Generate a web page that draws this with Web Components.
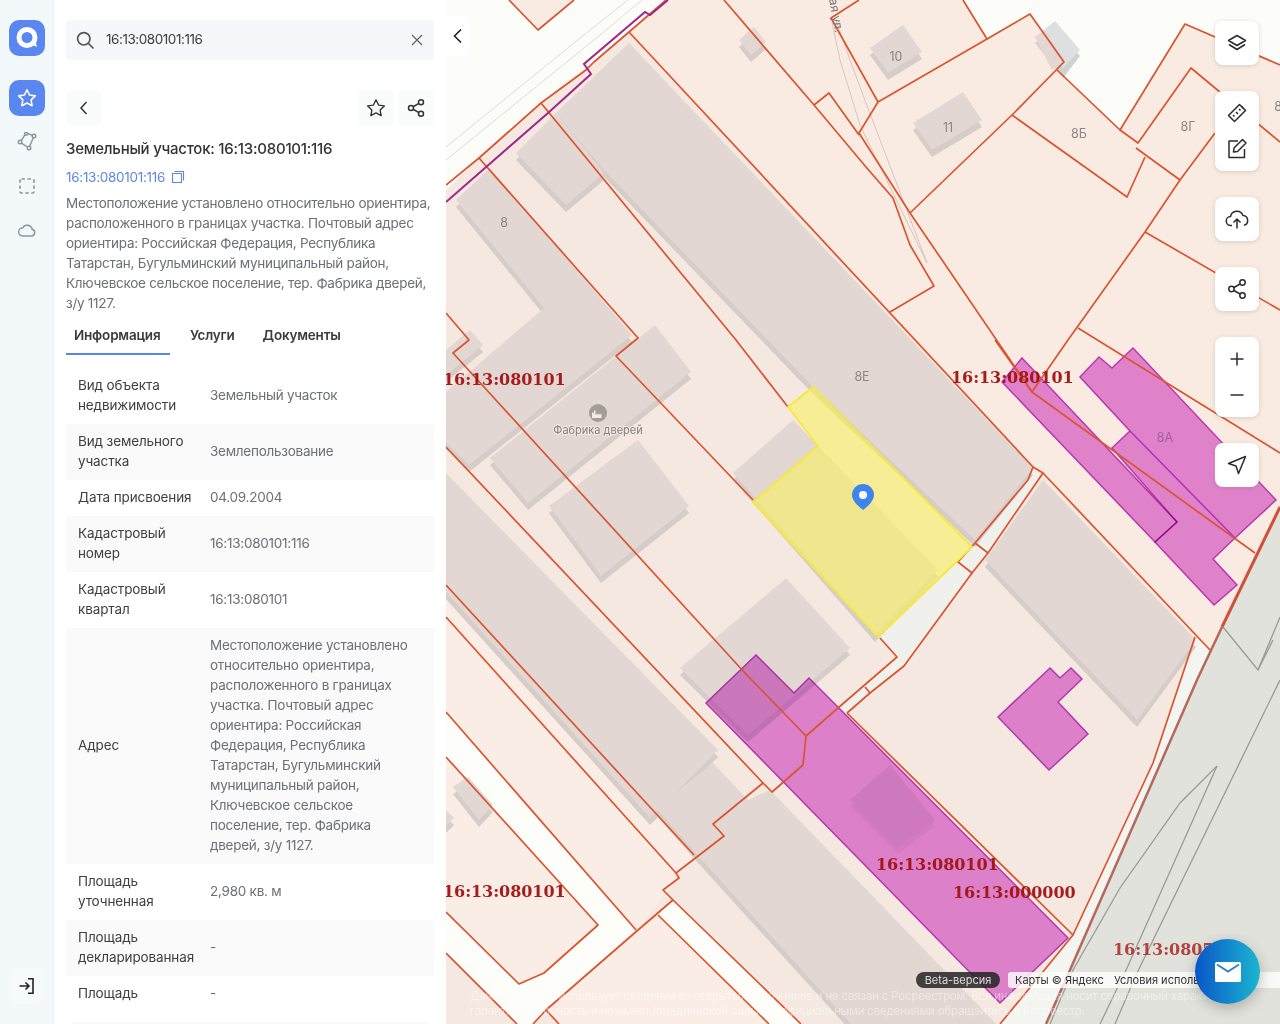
<!DOCTYPE html>
<html lang="ru">
<head>
<meta charset="utf-8">
<title>Земельный участок</title>
<style>
  html, body { margin: 0; height: 100%; overflow: hidden; }
  body { font-family: "Inter", "Noto Sans", sans-serif; font-size: 14px; color: #333; }
</style>
</head>
<body>
<app-shell>
  <rail-bar slot="rail">
    <rail-button kind="logo"><svg viewBox="0 0 36 36" width="36" height="36"><circle cx="18" cy="17.500" r="8" fill="none" stroke="#fff" stroke-width="5"/><path d="M22 24l6 3-2-8z" fill="#fff"/></svg></rail-button>
    <rail-button kind="active"><svg viewBox="0 0 24 24" width="22" height="22" fill="none" stroke="#fff" stroke-width="1.700" stroke-linejoin="round"><path d="M12 3l2.800 5.800 6.300.9-4.600 4.400 1.100 6.300L12 17.400l-5.600 3 1.100-6.300L2.900 9.700l6.300-.9z"/></svg></rail-button>
    <rail-button><svg viewBox="0 0 20 20" width="20" height="20" fill="none" stroke="#8a949c" stroke-width="1.400"><path d="M4.300 8.700L7.800 2.800M10.800 1.500l4.500 1.800M16.300 5.800L12.700 14.200M10.400 15L4.400 11.200"/><circle cx="3" cy="10" r="1.800"/><circle cx="9" cy="1.800" r="1.500"/><circle cx="17" cy="4" r="1.800"/><circle cx="12" cy="16" r="1.800"/></svg></rail-button>
    <rail-button><svg viewBox="0 0 20 20" width="20" height="20" fill="none" stroke="#8a949c" stroke-width="1.600"><rect x="3" y="3" width="14" height="14" rx="1.500" stroke-dasharray="3.400 2.600"/></svg></rail-button>
    <rail-button><svg viewBox="0 0 20 20" width="20" height="20" fill="none" stroke="#8a949c" stroke-width="1.400" stroke-linejoin="round"><path d="M5.500 16h9a3.400 3.400 0 0 0 .6-6.700A5 5 0 0 0 5.700 8 4 4 0 0 0 5.500 16z"/></svg></rail-button>
    <rail-button kind="exit" slot="bottom"><svg viewBox="0 0 20 20" width="20" height="20" fill="none" stroke="#222" stroke-width="1.600"><path d="M11 2.800h5v14.400h-5M2.500 10h9.500M8.500 6.500L12 10l-3.500 3.500"/></svg></rail-button>
  </rail-bar>

  <object-panel slot="panel">
    <search-box value="16:13:080101:116"></search-box>
    <panel-actions></panel-actions>
    <object-head name="Земельный участок: 16:13:080101:116" number="16:13:080101:116">Местоположение установлено относительно ориентира, расположенного в границах участка. Почтовый адрес ориентира: Российская Федерация, Республика Татарстан, Бугульминский муниципальный район, Ключевское сельское поселение, тер. Фабрика дверей, з/у 1127.</object-head>
    <info-tabs></info-tabs>
    <info-table>
      <info-row label="Вид объекта недвижимости">Земельный участок</info-row>
      <info-row label="Вид земельного участка">Землепользование</info-row>
      <info-row label="Дата присвоения">04.09.2004</info-row>
      <info-row label="Кадастровый номер">16:13:080101:116</info-row>
      <info-row label="Кадастровый квартал">16:13:080101</info-row>
      <info-row label="Адрес">Местоположение установлено относительно ориентира, расположенного в границах участка. Почтовый адрес ориентира: Российская Федерация, Республика Татарстан, Бугульминский муниципальный район, Ключевское сельское поселение, тер. Фабрика дверей, з/у 1127.</info-row>
      <info-row label="Площадь уточненная">2,980 кв. м</info-row>
      <info-row label="Площадь декларированная">-</info-row>
      <info-row label="Площадь" tall>-</info-row>
      <info-row label=" " stub> </info-row>
    </info-table>
  </object-panel>

  <map-view slot="map">
    <map-tools></map-tools>
    <map-footer></map-footer>
  </map-view>
</app-shell>

<script>
class AppShell extends HTMLElement {
  constructor() {
    super();
    this.attachShadow({ mode: 'open' });
    this.shadowRoot.innerHTML = `
      <style>
        :host { display: flex; width: 1280px; height: 1024px; overflow: hidden; }
        ::slotted([slot=rail]) { flex: 0 0 54px; }
        ::slotted([slot=panel]) { flex: 0 0 392px; }
        ::slotted([slot=map]) { flex: 1 1 auto; }
      </style>
      <slot name="rail"></slot><slot name="panel"></slot><slot name="map"></slot>`;
  }
}

class RailBar extends HTMLElement {
  constructor() {
    super();
    this.attachShadow({ mode: 'open' });
    this.shadowRoot.innerHTML = `
      <style>
        :host { display: flex; flex-direction: column; align-items: center; box-sizing: border-box;
          height: 1024px; padding: 20px 0 20px; background: #f3f8fb; box-shadow: inset -3px 0 3px -2px #e8eef2; }
        .top { display: flex; flex-direction: column; gap: 8px; flex: 1; }
      </style>
      <div class="top"><slot></slot></div>
      <slot name="bottom"></slot>`;
  }
}

class RailButton extends HTMLElement {
  constructor() {
    super();
    this.attachShadow({ mode: 'open' });
    this.shadowRoot.innerHTML = `
      <style>
        :host { display: flex; width: 36px; height: 36px; align-items: center; justify-content: center; border-radius: 10px; }
        :host([kind=logo]) { background: #5a86f0; margin-bottom: 16px; }
        :host([kind=active]) { background: #5a86f0; }
        :host([kind=exit]) { background: #f7fafc; }
        ::slotted(svg) { display: block; }
      </style>
      <slot></slot>`;
  }
}

class SearchBox extends HTMLElement {
  constructor() {
    super();
    this.attachShadow({ mode: 'open' });
    this.shadowRoot.innerHTML = `
      <style>
        :host { display: flex; align-items: center; height: 40px; background: #f5f7fa; border-radius: 4px;
          padding: 0 10px 0 9px; color: #3d3d3d; font-size: 13.500px; letter-spacing: -.45px; }
        span { flex: 1; margin-left: 11px; position: relative; top: -1px; }
        svg { display: block; }
      </style>
      <svg viewBox="0 0 20 20" width="20" height="20" fill="none" stroke="#555" stroke-width="1.700"><circle cx="8.800" cy="8.800" r="6.200"/><path d="M13.500 13.500L18.500 18.500"/></svg>
      <span></span>
      <svg viewBox="0 0 14 14" width="14" height="14" fill="none" stroke="#666" stroke-width="1.300"><path d="M2 2l10 10M12 2L2 12"/></svg>`;
    this.shadowRoot.querySelector('span').textContent = this.getAttribute('value');
  }
}

class SquareButton extends HTMLElement {
  constructor() {
    super();
    this.attachShadow({ mode: 'open' });
    this.shadowRoot.innerHTML = `
      <style>
        :host { display: flex; width: 36px; height: 36px; align-items: center; justify-content: center;
          background: #fafbfb; border-radius: 6px; }
        ::slotted(svg) { display: block; }
      </style>
      <slot></slot>`;
  }
}

class PanelActions extends HTMLElement {
  constructor() {
    super();
    this.attachShadow({ mode: 'open' });
    this.shadowRoot.innerHTML = `
      <style>
        :host { display: flex; gap: 4px; margin-top: 30px; }
        .sp { flex: 1; }
      </style>
      <square-button><svg viewBox="0 0 20 20" width="20" height="20" fill="none" stroke="#333" stroke-width="1.500"><path d="M12.500 4L7 10l5.500 6"/></svg></square-button>
      <div class="sp"></div>
      <square-button><svg viewBox="0 0 24 24" width="22" height="22" fill="none" stroke="#333" stroke-width="1.500" stroke-linejoin="round"><path d="M12 3l2.800 5.800 6.300.9-4.600 4.400 1.100 6.300L12 17.400l-5.600 3 1.100-6.300L2.900 9.700l6.300-.9z"/></svg></square-button>
      <square-button><svg viewBox="0 0 24 24" width="20" height="20" fill="none" stroke="#333" stroke-width="1.800"><circle cx="18" cy="5" r="3"/><circle cx="6" cy="12" r="3"/><circle cx="18" cy="19" r="3"/><path d="M8.600 10.500l6.800-4M8.600 13.500l6.800 4"/></svg></square-button>`;
  }
}

class ObjectHead extends HTMLElement {
  constructor() {
    super();
    this.attachShadow({ mode: 'open' });
    this.shadowRoot.innerHTML = `
      <style>
        :host { display: block; margin-top: 13px; }
        h1 { margin: 0; font-size: 15px; line-height: 20px; font-weight: 500; color: #333; letter-spacing: -.24px; }
        .num { display: flex; align-items: center; gap: 6px; margin-top: 8px; height: 20px; color: #5f89e0; font-size: 13.500px; letter-spacing: -.28px; }
        p { margin: 6px 0 0; font-size: 13.500px; line-height: 20px; color: #6d7074; letter-spacing: -.27px; }
      </style>
      <h1></h1>
      <div class="num"><span></span><svg viewBox="0 0 14 14" width="14" height="14" fill="none" stroke="#5f89e0" stroke-width="1.100"><rect x="1.500" y="3.500" width="9" height="9"/><path d="M3.500 1.500h9v9"/></svg></div>
      <p><slot></slot></p>`;
    this.shadowRoot.querySelector('h1').textContent = this.getAttribute('name');
    this.shadowRoot.querySelector('.num span').textContent = this.getAttribute('number');
  }
}

class InfoTabs extends HTMLElement {
  constructor() {
    super();
    this.attachShadow({ mode: 'open' });
    this.shadowRoot.innerHTML = `
      <style>
        :host { display: flex; gap: 12px; margin-top: 3px; height: 39px; font-size: 13.500px; font-weight: 600; color: #3c3c3c; letter-spacing: -.2px; }
        div { padding: 9px 8px 0; line-height: 20px; box-sizing: border-box; height: 39px; }
        .on { border-bottom: 2px solid #5a86f0; min-width: 104px; }
      </style>
      <div class="on">Информация</div><div>Услуги</div><div>Документы</div>`;
  }
}

class InfoTable extends HTMLElement {
  constructor() {
    super();
    this.attachShadow({ mode: 'open' });
    this.shadowRoot.innerHTML = `
      <style>:host { display: block; margin-top: 13px; }</style>
      <slot></slot>`;
  }
}

class InfoRow extends HTMLElement {
  constructor() {
    super();
    this.attachShadow({ mode: 'open' });
    this.shadowRoot.innerHTML = `
      <style>
        :host { display: grid; grid-template-columns: 132px 1fr; align-items: center; padding: 7px 12px 9px;
          font-size: 13.500px; line-height: 20px; letter-spacing: -.12px; }
        :host(:nth-child(even)) { background: #fafafa; }
        :host([tall]) { padding-bottom: 19px; }
        :host([stub]) { margin: 0 6px; padding: 7px 6px 9px; }
        .l { color: #3f3f3f; padding-right: 6px; }
        .v { color: #6d7074; letter-spacing: -.25px; }
      </style>
      <div class="l"></div><div class="v"><slot></slot></div>`;
    this.shadowRoot.querySelector('.l').textContent = this.getAttribute('label');
  }
}

class ObjectPanel extends HTMLElement {
  constructor() {
    super();
    this.attachShadow({ mode: 'open' });
    this.shadowRoot.innerHTML = `
      <style>
        :host { display: block; box-sizing: border-box; height: 1024px; overflow: hidden; padding: 20px 12px 0; background: #fff; }
      </style>
      <slot></slot>`;
  }
}

const ORANGE = [
  [[509,0],[538,30],[574,0]],
  [[446,185],[479,158],[541,103],[586,70],[594,62],[629,32],[666,0]],
  [[479,158],[638,338],[616,356],[753,500]],
  [[541,103],[736,340],[788,407]],
  [[629,32],[1033,467],[1043,473],[1210,650]],
  [[1033,467],[1028,480],[975,543],[958,562],[972,573],[988,553],[975,543]],
  [[1043,473],[988,553]],
  [[972,573],[904,666],[870,693],[847,713]],
  [[865,687],[870,693]],
  [[880,638],[897,657],[838,708],[806,736],[803,765],[772,792],[763,783],[713,824],[724,836],[676,873],[679,878],[663,890],[673,900],[638,930],[546,1010],[533,1024]],
  [[446,313],[469,340],[453,353],[744,672],[806,736]],
  [[446,447],[763,783]],
  [[446,585],[694,855]],
  [[446,617],[676,873]],
  [[446,712],[636,930]],
  [[446,757],[598,925],[544,973],[519,984],[446,912]],
  [[446,953],[517,1024]],
  [[546,1010],[559,1024]],
  [[658,915],[769,1024]],
  [[673,900],[801,1024]],
  [[724,0],[814,105],[866,167],[893,198],[910,245],[934,286],[890,312]],
  [[814,105],[829,93],[859,135]],
  [[831,18],[878,102],[859,133],[910,213],[1032,392]],
  [[859,0],[831,18]],
  [[963,0],[987,39],[878,102]],
  [[987,39],[1030,14],[1064,62],[1012,115],[910,213]],
  [[1012,115],[1127,197],[1145,157]],
  [[1057,70],[1120,130],[1185,24],[1280,65]],
  [[1120,130],[1138,143],[1191,68],[1280,142]],
  [[1136,148],[1180,180],[1215,133]],
  [[1032,392],[1068,340],[1145,232],[1180,180]],
  [[1145,232],[1280,310]],
  [[1078,328],[1280,453]],
  [[1032,392],[1255,553]],
  [[1032,392],[995,340]],
  [[847,713],[1073,935],[1042,973],[1000,1024]],
  [[1195,637],[1153,763],[1073,935]],
];
const BUILDINGS = [
  [[629,43],[1033,468],[975,540],[813,387],[604,170],[556,113]],
  [[793,420],[938,570],[875,635],[733,473]],
  [[516,153],[556,113],[604,173],[566,205]],
  [[490,168],[456,200],[544,308],[446,392],[446,442],[469,465],[632,335]],
  [[470,330],[483,345],[446,375],[446,350]],
  [[655,325],[691,372],[528,503],[490,458]],
  [[638,440],[689,506],[601,576],[549,506]],
  [[786,578],[850,648],[748,735],[680,668]],
  [[446,473],[718,750],[650,818],[446,592]],
  [[713,763],[748,800],[770,790],[1006,1034],[860,1034],[700,858],[656,808]],
  [[1043,480],[1196,640],[1137,720],[985,560]],
  [[963,92],[982,120],[932,150],[913,123]],
  [[903,25],[922,52],[888,73],[870,48]],
  [[754,27],[766,42],[751,55],[739,40]],
  [[453,787],[468,777],[493,805],[479,820]],
  [[446,810],[454,818],[446,826]],
];
const pts = p => p.map(q => q.join(',')).join(' ');
const poly = (p, attrs) => `<polygon points="${pts(p)}" ${attrs}/>`;
const line = (p, attrs) => `<polyline points="${pts(p)}" fill="none" ${attrs}/>`;
const label = (x, y, t, extra = '') => `<text class="kad" x="${x}" y="${y}" ${extra}>${t}</text>`;
const house = (x, y, t, extra = '') => `<text class="num" x="${x}" y="${y}" ${extra}>${t}</text>`;

class MapView extends HTMLElement {
  constructor() {
    super();
    this.attachShadow({ mode: 'open' });
    const purple = 'fill="#e58de4" stroke="#bd3cc4" stroke-width="1.500" style="mix-blend-mode:multiply"';
    this.shadowRoot.innerHTML = `
      <style>
        :host { display: block; position: relative; height: 1024px; overflow: hidden; background: #fcfcf8; }
        svg.map { display: block; position: absolute; left: 0; top: 0; }
        .kad { font: bold 16px "DejaVu Serif", serif; fill: #a01010; fill-opacity: .94; letter-spacing: -.05px; }
        .num { font: 12.500px "Inter", sans-serif; fill: #8e8682; text-anchor: middle; }
        .poi { font: 11px "Inter", sans-serif; fill: #85807d; text-anchor: middle; paint-order: stroke; stroke: #f3e8e2; stroke-width: 2px; }
        .tab { position: absolute; left: 0; top: 16px; width: 24px; height: 40px; background: #fff; border-radius: 0 6px 6px 0;
          display: flex; align-items: center; justify-content: center; }
      </style>
      <svg class="map" width="834" height="1024" viewBox="446 0 834 1024">
        ${poly([[446,190],[479,158],[541,103],[629,32],[666,0],[963,0],[987,39],[1030,14],[1064,62],[1057,70],[1120,130],[1185,24],[1280,65],[1280,507],[1222,627],[1210,650],[1195,637],[1153,763],[1073,935],[1042,973],[1000,1024],[446,1024]], 'fill="#faebe2"')}
        ${poly([[446,190],[479,158],[629,32],[1033,467],[1195,637],[1153,763],[1073,935],[1000,1024],[446,1024]], 'fill="#f5e8e1"')}
        ${poly([[446,585],[694,855],[638,930],[446,712]], 'fill="#faede5"')}
        ${poly([[446,757],[598,925],[544,973],[519,984],[446,912]], 'fill="#faede5"')}
        ${poly([[546,1010],[658,915],[769,1024],[559,1024]], 'fill="#faede5"')}
        ${poly([[509,0],[538,30],[574,0]], 'fill="#faebe2"')}
        ${poly([[446,712],[636,930],[546,1010],[533,1024],[517,1024],[446,953],[446,912],[519,984],[544,973],[598,925],[446,757]], 'fill="#fdfdfa"')}
        ${poly([[658,915],[673,900],[801,1024],[769,1024]], 'fill="#fdfdfa"')}
        ${poly([[1033,470],[1043,475],[988,553],[972,573],[904,666],[870,693],[847,713],[838,708],[897,655],[880,637],[958,562],[975,543]], 'fill="#f0f0ec"')}
        ${poly([[1195,637],[1210,650],[1197,680],[1070,970],[1046,1024],[1000,1024],[1073,935],[1153,763]], 'fill="#f4f4f0"')}
        ${poly([[1280,507],[1222,627],[1197,680],[1070,970],[1046,1024],[1280,1024]], 'fill="#e2e2dd"')}
        ${BUILDINGS.map(b => poly(b, 'fill="#d6ccc8" transform="translate(0 7)"')).join('')}
        ${BUILDINGS.map(b => poly(b, 'fill="#e2d7d3"')).join('')}
        ${poly([[890,765],[935,820],[898,848],[850,800]], 'fill="#ecdcd8" transform="translate(0 6)"')}
        ${poly([[890,765],[935,820],[898,848],[850,800]], 'fill="#e6d9d5"')}
        ${poly([[1055,21],[1080,50],[1063,72],[1035,37]], 'fill="#cfd2d2" transform="translate(0 6)"')}
        ${poly([[1055,21],[1080,50],[1063,68],[1035,37]], 'fill="#dde0e0"')}
        ${poly([[1045,30],[1064,62],[1052,70],[1035,37]], 'fill="#e2d7d3"')}
        ${line([[446,147],[590,30],[628,0]], 'stroke="#dcdcd8"')}
        ${line([[446,160],[600,35],[642,0]], 'stroke="#dcdcd8"')}
        ${line([[832,22],[840,60],[860,125],[927,263]], 'stroke="#c9bdb7" stroke-width=".8"')}
        ${line([[836,20],[850,60],[866,103],[927,263]], 'stroke="#c9bdb7" stroke-width=".8"')}
        ${poly([[1022,358],[1177,522],[1155,542],[1002,382]], purple)}
        ${poly([[1080,377],[1099,357],[1112,368],[1133,348],[1276,500],[1235,538],[1213,559],[1237,585],[1214,605],[1155,542],[1177,522],[1112,448],[1130,431]], purple)}
        ${line([[1130,431],[1235,538]], 'stroke="#b030b8" stroke-width="1.500"')}
        ${poly([[756,655],[794,693],[809,678],[1068,938],[1000,1003],[706,703]], purple)}
        ${poly([[1050,668],[1060,678],[1071,668],[1082,679],[1058,702],[1088,734],[1049,770],[998,717]], purple)}
        ${ORANGE.map(l => line(l, 'stroke="#d9552f" stroke-width="1.700" stroke-linejoin="round"')).join('')}
        ${line([[446,202],[548,113],[591,74],[584,64],[645,12],[650,15],[668,0]], 'stroke="#9b2a8a" stroke-width="2"')}
        ${line([[1280,507],[1222,627]], 'stroke="#d0503a" stroke-width="3"')}
        ${line([[1222,627],[1197,680],[1070,970],[1046,1024]], 'stroke="#b5695c" stroke-width="2.500"')}
        ${line([[1223,627],[1258,670],[1280,617]], 'stroke="#9a9a96" stroke-width="1.300"')}
        ${line([[1273,640],[1258,670]], 'stroke="#9a9a96" stroke-width="1.300"')}
        ${line([[1217,766],[1180,803],[1120,888],[1073,970],[1050,1024]], 'stroke="#9a9a96" stroke-width="1.300"')}
        ${line([[1217,766],[1127,968],[1100,1024]], 'stroke="#9a9a96" stroke-width="1.300"')}
        ${line([[1280,680],[1137,973],[1115,1024]], 'stroke="#9a9a96" stroke-width="1.300"')}
        ${poly([[813,387],[788,407],[818,446],[753,502],[878,637],[972,547]], 'fill="#f8f060" fill-opacity=".6" stroke="#f4ea3c" stroke-width="1.800"')}
        ${house(504,227,'8')}${house(896,61,'10')}${house(948,132,'11')}${house(1079,138,'8Б')}${house(1188,131,'8Г')}${house(862,381,'8Е')}${house(1165,442,'8А','style="fill:#a060a0"')}${house(1278,111,'8')}
        <text class="num" transform="translate(829 -1) rotate(80)" style="text-anchor:start;fill:#777">ая ул.</text>
        <circle cx="598" cy="413" r="9" fill="#a39c99"/>
        <path d="M592 418v-6l2 1.500v-3h1.500v4.500l2-1.500v1.500l2-1.500v1.500l2-1.500v4.500z" fill="#f4ece8"/>
        <text class="poi" x="598" y="434">Фабрика дверей</text>
        ${label(443,385,'16:13:080101')}
        ${label(951,383,'16:13:080101')}
        ${label(443,897,'16:13:080101')}
        ${label(876,870,'16:13:080101')}
        ${label(953,898,'16:13:000000')}
        ${label(1113,955,'16:13:080501','opacity=".8"')}
        <path d="M863 484a11 11 0 0 1 11 11c0 6-7 12-11 15-4-3-11-9-11-15a11 11 0 0 1 11-11z" fill="#3f84ec"/>
        <circle cx="863" cy="495" r="4" fill="#fff"/>
      </svg>
      <div class="tab"><svg viewBox="0 0 20 20" width="20" height="20" fill="none" stroke="#222" stroke-width="1.600"><path d="M13 3.500L6.500 10l6.500 6.500"/></svg></div>
      <slot></slot>`;
  }
}

class ToolGroup extends HTMLElement {
  constructor() {
    super();
    this.attachShadow({ mode: 'open' });
    this.shadowRoot.innerHTML = `
      <style>
        :host { display: flex; flex-direction: column; width: 44px; background: #fff; border-radius: 8px;
          box-shadow: 0 1px 4px rgba(120,100,90,.25); }
      </style>
      <slot></slot>`;
  }
}

class MapTools extends HTMLElement {
  constructor() {
    super();
    this.attachShadow({ mode: 'open' });
    const s = 'viewBox="0 0 24 24" width="24" height="24" fill="none" stroke="#2c2c2c" stroke-width="1.500" stroke-linejoin="round"';
    this.shadowRoot.innerHTML = `
      <style>
        :host { position: absolute; left: 769px; top: 21px; display: flex; flex-direction: column; gap: 26px; }
        tool-group svg { display: block; margin: 10px; }
        .pair svg:first-child { margin: 10px 10px 6px; }
        .pair svg:last-child { margin: 6px 10px 10px; }
      </style>
      <tool-group><svg ${s}><path d="M12 4.500l8.500 5-8.500 5-8.500-5z"/><path d="M4 13.500l8 5 8-5"/></svg></tool-group>
      <tool-group class="pair">
        <svg ${s}><path d="M3.500 14.500L14.500 3.500l6 6L9.500 20.500z"/><path d="M8 14l1.500 1.500M11 11l2 2M14 8l1.500 1.500M17 5.500L18 7"/></svg>
        <svg ${s} stroke-width="1.700"><path d="M13 4H4v16.500h15.500V12"/><path d="M9.500 11L18 2.500l3.500 3.500L13 14.500l-4 .5z" transform="translate(-.5 0)"/></svg>
      </tool-group>
      <tool-group><svg ${s} stroke-width="2"><path d="M7 18.500H6a4.500 4.500 0 0 1-.5-9A6.500 6.500 0 0 1 18 8.500a5 5 0 0 1 1 9.800"/><path d="M12 21.500v-9M8.500 15.500L12 12l3.500 3.500"/></svg></tool-group>
      <tool-group><svg ${s} stroke-width="1.700"><circle cx="17.500" cy="5.500" r="2.700"/><circle cx="6.500" cy="12" r="2.700"/><circle cx="17.500" cy="18.500" r="2.700"/><path d="M9 10.500l6-3.500M9 13.500l6 3.500"/></svg></tool-group>
      <tool-group class="pair">
        <svg ${s} stroke-width="1.700"><path d="M12 5.500v13M5.500 12h13"/></svg>
        <svg ${s} stroke-width="1.700"><path d="M5.500 12h13"/></svg>
      </tool-group>
      <tool-group><svg ${s}><path d="M20.500 3.500l-17 7 7.500 2.500 2.500 7.500z"/></svg></tool-group>`;
  }
}

class MapFooter extends HTMLElement {
  constructor() {
    super();
    this.attachShadow({ mode: 'open' });
    this.shadowRoot.innerHTML = `
      <style>
        :host { position: absolute; left: 0; right: 0; bottom: 0; height: 90px; font-family: "Inter", sans-serif; overflow: hidden; }
        .bar { position: absolute; left: 470px; top: 38px; display: flex; gap: 8px; height: 16px; font-size: 11px; line-height: 16px; }
        .beta { width: 84px; text-align: center; border-radius: 8px; background: rgba(35,35,35,.85); color: #ddd; }
        .ya { width: 280px; padding-left: 7px; border-radius: 3px; background: rgba(255,255,255,.8); color: #333; white-space: nowrap; overflow: hidden; }
        .ya span { margin-left: 7px; }
        .note { position: absolute; left: 24px; top: 55px; width: 830px; font-size: 11.500px; line-height: 15px; letter-spacing: -.2px; color: rgba(255,255,255,.42); white-space: nowrap; }
        .fab { position: absolute; left: 749px; top: 5px; width: 65px; height: 65px; border-radius: 50%;
          background: linear-gradient(90deg, #0a55c8, #1cb6d0); box-shadow: 0 4px 14px rgba(0,0,0,.25);
          display: flex; align-items: center; justify-content: center; }
        .fab svg { display: block; }
      </style>
      <div class="note">Данный ресурс использует сведения из открытых источников и не связан с Росреестром. Вся информация носит справочный характер,<br>гарантий на точность и не имеет юридической силы. За официальными сведениями обращайтесь в Росреестр.</div>
      <div class="bar"><div class="beta">Beta-версия</div><div class="ya">Карты © Яндекс <span>Условия использования</span></div></div>
      <div class="fab"><svg viewBox="0 0 26 20" width="26" height="20"><rect width="26" height="20" rx="1.500" fill="#fff"/><path d="M2 2.500l11 7 11-7" fill="none" stroke="#2d87c8" stroke-width="2"/></svg></div>`;
  }
}

customElements.define('app-shell', AppShell);
customElements.define('rail-bar', RailBar);
customElements.define('rail-button', RailButton);
customElements.define('search-box', SearchBox);
customElements.define('square-button', SquareButton);
customElements.define('panel-actions', PanelActions);
customElements.define('object-head', ObjectHead);
customElements.define('info-tabs', InfoTabs);
customElements.define('info-table', InfoTable);
customElements.define('info-row', InfoRow);
customElements.define('object-panel', ObjectPanel);
customElements.define('map-view', MapView);
customElements.define('tool-group', ToolGroup);
customElements.define('map-tools', MapTools);
customElements.define('map-footer', MapFooter);
</script>
</body>
</html>
